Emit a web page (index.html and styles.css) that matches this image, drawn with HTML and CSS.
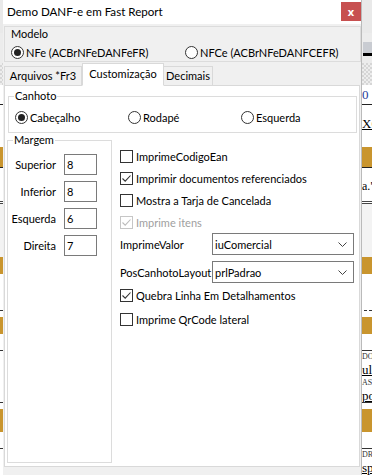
FILE: index.html
```html
<!DOCTYPE html>
<html lang="pt-BR">
<head>
    <meta charset="UTF-8">
    <meta name="viewport" content="width=device-width, initial-scale=1.0">
    <title>Demo DANF-e em Fast Report</title>
    <link rel="stylesheet" href="styles.css">
</head>
<body>
    <!-- Relatório aberto atrás do diálogo -->
    <div class="report">
        <div class="rep rep-top"></div>
        <div class="rep rep-tools"><span class="rep-icon"></span></div>
        <div class="rep rep-checker"></div>
        <div class="rep rep-num">0</div>
        <div class="rep rep-xc"><u>XC</u></div>
        <div class="rep rep-band rep-h20"></div>
        <div class="rep rep-quote">a."</div>
        <div class="rep rep-gray"></div>
        <div class="rep rep-band rep-h17"></div>
        <div class="rep rep-dash"></div>
        <div class="rep rep-gap"></div>
        <div class="rep rep-band rep-h17"></div>
        <div class="rep rep-white rep-ruled"></div>
        <div class="rep rep-small">DO</div>
        <div class="rep rep-big"><u>ulo</u></div>
        <div class="rep rep-small">AS.</div>
        <div class="rep rep-big rep-ruled"><u>po</u></div>
        <div class="rep rep-gap"></div>
        <div class="rep rep-band rep-h23"></div>
        <div class="rep rep-white rep-ruled"></div>
        <div class="rep rep-small">DR</div>
        <div class="rep rep-big"><u>spo</u></div>
    </div>

    <div class="window">
        <div class="titlebar">
            <span class="title">Demo DANF-e em Fast Report</span>
            <span class="btn-close">x</span>
        </div>

        <!-- Modelo -->
        <div class="modelo">
            <div class="caption">Modelo</div>
            <div class="modelo-opts">
                <div class="radio checked"><span class="dot"></span>NFe (ACBrNFeDANFeFR)</div>
                <div class="radio"><span class="dot"></span>NFCe (ACBrNFeDANFCEFR)</div>
            </div>
        </div>

        <!-- Abas -->
        <div class="tabs">
            <div class="tab tab-arq">Arquivos *Fr3</div>
            <div class="tab tab-cust active">Customização</div>
            <div class="tab tab-dec">Decimais</div>
        </div>

        <div class="page">
            <fieldset class="group canhoto">
                <legend>Canhoto</legend>
                <div class="canhoto-opts">
                    <div class="radio checked"><span class="dot"></span>Cabeçalho</div>
                    <div class="radio"><span class="dot"></span>Rodapé</div>
                    <div class="radio"><span class="dot"></span>Esquerda</div>
                </div>
            </fieldset>

            <div class="lower">
                <fieldset class="group margem">
                    <legend>Margem</legend>
                    <div class="field"><span class="lbl">Superior</span><span class="edit">8</span></div>
                    <div class="field"><span class="lbl">Inferior</span><span class="edit">8</span></div>
                    <div class="field"><span class="lbl">Esquerda</span><span class="edit">6</span></div>
                    <div class="field"><span class="lbl">Direita</span><span class="edit">7</span></div>
                </fieldset>

                <div class="opts">
                    <div class="check"><span class="box"></span>ImprimeCodigoEan</div>
                    <div class="check">
                        <span class="box"><svg width="11" height="11" viewBox="0 0 11 11"><path d="M1.5 5.5 L4.2 8.2 L9.5 2.5" /></svg></span>Imprimir documentos referenciados
                    </div>
                    <div class="check"><span class="box"></span>Mostra a Tarja de Cancelada</div>
                    <div class="check disabled">
                        <span class="box"><svg width="11" height="11" viewBox="0 0 11 11"><path d="M1.5 5.5 L4.2 8.2 L9.5 2.5" /></svg></span>Imprime itens
                    </div>

                    <div class="combo-row">
                        <span class="combo-lbl">ImprimeValor</span>
                        <span class="combo">iuComercial<svg width="9" height="5" viewBox="0 0 9 5"><path d="M0.5 0.5 L4.5 4.5 L8.5 0.5" /></svg></span>
                    </div>
                    <div class="combo-row">
                        <span class="combo-lbl">PosCanhotoLayout</span>
                        <span class="combo">prlPadrao<svg width="9" height="5" viewBox="0 0 9 5"><path d="M0.5 0.5 L4.5 4.5 L8.5 0.5" /></svg></span>
                    </div>

                    <div class="check tall">
                        <span class="box"><svg width="11" height="11" viewBox="0 0 11 11"><path d="M1.5 5.5 L4.2 8.2 L9.5 2.5" /></svg></span>Quebra Linha Em Detalhamentos
                    </div>
                    <div class="check tall"><span class="box"></span>Imprime QrCode lateral</div>
                </div>
            </div>
        </div>
    </div>
</body>
</html>
```

FILE: styles.css
```css
/* Global */
* {
    box-sizing: border-box;
}

body {
    margin: 0;
    width: 372px;
    height: 475px;
    overflow: hidden;
    position: relative;
    background: #eaeaea;
    font-family: Lato, "Noto Sans", sans-serif;
    font-size: 11px;
    color: #000;
}

/* Report behind the dialog */
.report {
    position: absolute;
    inset: 0;
    display: flex;
    flex-direction: column;
    font-family: "Liberation Serif", serif;
}

.rep {
    flex: none;
    padding-left: 362px;
    white-space: nowrap;
    overflow: hidden;
    background: #fff;
}

.rep-top { height: 33px; background: #e9e9e9; }
.rep-tools { height: 30px; background: #ececec; padding-top: 9px; padding-left: 363px; }
.rep-icon {
    display: block;
    width: 11px;
    height: 14px;
    background: #c9ccd2;
    border-bottom: 3px solid #000;
}
.rep-checker {
    height: 22px;
    background: repeating-conic-gradient(#d6d6d6 0 25%, #ededed 0 50%) 0 0 / 4px 4px;
}
.rep-num { height: 20px; line-height: 20px; color: #1e3c9a; font-size: 13px; border-bottom: 1px solid #222; }
.rep-xc { height: 42px; padding-top: 12px; font-size: 13px; line-height: 14px; }
.rep-band { background: #c9952e; }
.rep-h17 { height: 17px; }
.rep-h20 { height: 20px; }
.rep-h23 { height: 23px; }
.rep-quote {
    height: 37px;
    padding-top: 11px;
    font-size: 12px;
    line-height: 14px;
    border-top: 1px solid #222;
    border-bottom: 3px double #444;
}
.rep-gray { height: 53px; background: #f3f3f3; }
.rep-dash { height: 37px; border-bottom: 1px dashed #333; }
.rep-gap { height: 6px; }
.rep-white { height: 17px; }
.rep-ruled { border-bottom: 1px solid #333; }
.rep-small { height: 12px; font-size: 8px; line-height: 12px; color: #333; }
.rep-big { height: 14px; font-size: 13px; line-height: 14px; }

/* Dialog window */
.window {
    position: absolute;
    left: 3px;
    top: 0;
    width: 359px;
    height: 475px;
    background: #f0f0f0;
    border-right: 1px solid #bababa;
    display: flex;
    flex-direction: column;
}

.titlebar {
    flex: none;
    height: 24px;
    background: #fff;
    display: flex;
    justify-content: space-between;
    align-items: flex-start;
}

.title {
    padding-left: 4px;
    line-height: 24px;
    font-size: 11.6px;
}

.btn-close {
    width: 20px;
    height: 19px;
    margin-top: 2px;
    background: #c75050;
    color: #fff;
    font-family: "Noto Sans", sans-serif;
    font-weight: bold;
    font-size: 11px;
    display: flex;
    align-items: center;
    justify-content: center;
}

/* Modelo group */
.modelo {
    flex: none;
    margin: 2px 0 0 1px;
    height: 36px;
    border: 1px solid #dcdcdc;
}

.caption {
    padding-left: 6px;
    height: 14px;
    line-height: 14px;
}

.modelo-opts {
    display: grid;
    grid-template-columns: 174px auto;
    padding-left: 6px;
    margin-top: 3px;
}

/* Radio buttons */
.radio {
    display: flex;
    align-items: center;
    gap: 2px;
    height: 16px;
    white-space: nowrap;
}

.dot {
    flex: none;
    width: 13px;
    height: 13px;
    border: 1px solid #333;
    border-radius: 50%;
    background: #fff;
    padding: 2px;
}

.radio.checked .dot::after {
    content: "";
    display: block;
    width: 7px;
    height: 7px;
    border-radius: 50%;
    background: #222;
}

/* Tabs */
.tabs {
    flex: none;
    display: flex;
    align-items: flex-end;
    height: 23px;
    margin: 1px 0 -1px 1px;
    position: relative;
    z-index: 1;
}

.tab {
    height: 20px;
    border: 1px solid #d9d9d9;
    background: #f0f0f0;
    text-align: center;
    line-height: 17px;
    white-space: nowrap;
}

.tab-arq { width: 78px; }
.tab-cust { width: 82px; }
.tab-dec { width: 50px; margin-left: -1px; }

.tab.active {
    height: 23px;
    line-height: 19px;
    background: #fff;
    border-bottom-color: #fff;
    position: relative;
    z-index: 2;
}

/* Tab page */
.page {
    flex: none;
    margin-left: 1px;
    width: 356px;
    height: 382px;
    background: #fff;
    border: 1px solid #d9d9d9;
    display: flex;
    flex-direction: column;
}

.group {
    margin: 0;
    padding: 0;
    min-width: 0;
    border: 1px solid #dcdcdc;
}

.group legend {
    margin-left: 5px;
    padding: 0 1px;
    line-height: 14px;
}

.canhoto {
    flex: none;
    margin: 3px 0 0 3px;
    width: 349px;
    height: 44px;
}

.canhoto-opts {
    display: grid;
    grid-template-columns: 113px 113px auto;
    padding-left: 6px;
    margin-top: 6px;
}

.lower {
    flex: 1;
    display: flex;
    gap: 8px;
    padding: 0 0 3px 2px;
}

/* Margem */
.margem {
    flex: none;
    width: 105px;
}

.field {
    display: flex;
    align-items: center;
    gap: 8px;
    height: 21px;
    margin-top: 6px;
}

.field:first-of-type {
    margin-top: 7px;
}

.lbl {
    width: 48px;
    text-align: right;
}

.edit {
    width: 33px;
    height: 21px;
    border: 1px solid #7a7a7a;
    padding-left: 2px;
    line-height: 19px;
}

/* Options column */
.opts {
    display: flex;
    flex-direction: column;
    padding-top: 12px;
}

.check {
    display: flex;
    align-items: center;
    gap: 3px;
    height: 22px;
    white-space: nowrap;
}

.check.tall {
    height: 24px;
}

.box {
    flex: none;
    width: 13px;
    height: 13px;
    border: 1px solid #333;
    background: #fff;
}

.box svg {
    display: block;
}

.box path {
    fill: none;
    stroke: #333;
    stroke-width: 1.1;
}

.check.disabled {
    color: #a0a0a0;
}

.check.disabled .box {
    border-color: #c6c6c6;
}

.check.disabled .box path {
    stroke: #bcbcbc;
}

.combo-row {
    display: flex;
    align-items: center;
    height: 22px;
}

.combo-row + .combo-row {
    margin-top: 6px;
}

.combo-lbl {
    width: 92px;
    white-space: nowrap;
}

.combo {
    width: 142px;
    height: 22px;
    border: 1px solid #7a7a7a;
    padding: 0 6px 0 2px;
    display: flex;
    align-items: center;
    justify-content: space-between;
}

.combo path {
    fill: none;
    stroke: #444;
    stroke-width: 1;
}
```
